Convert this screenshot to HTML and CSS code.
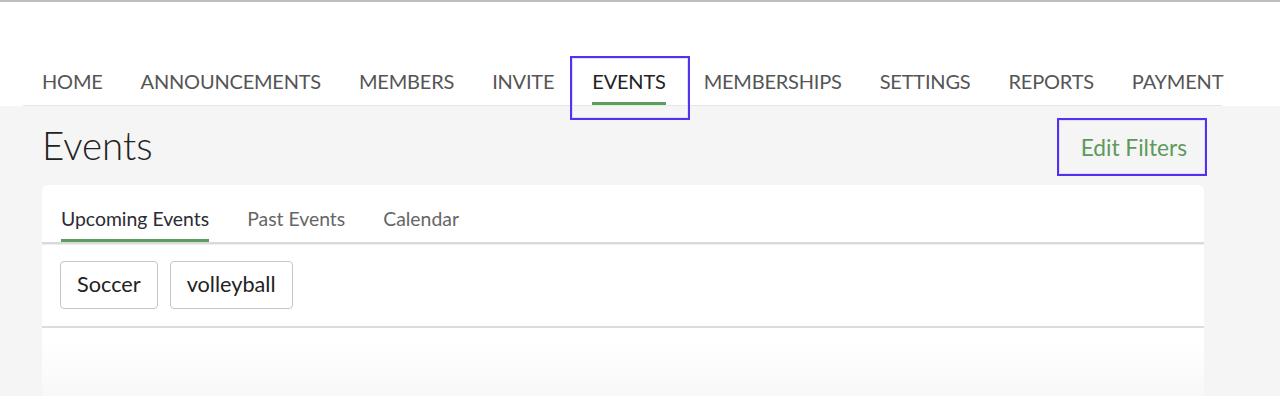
FILE: index.html
```html
<!DOCTYPE html>
<html lang="en">
<head>
    <meta charset="UTF-8">
    <meta name="viewport" content="width=device-width, initial-scale=1.0">
    <title>Events</title>
    <link rel="stylesheet" href="styles.css">
</head>
<body>
    <header class="topbar">
        <nav class="main-nav">
            <a href="#" class="nav-link">HOME</a>
            <a href="#" class="nav-link">ANNOUNCEMENTS</a>
            <a href="#" class="nav-link">MEMBERS</a>
            <a href="#" class="nav-link">INVITE</a>
            <a href="#" class="nav-link active">EVENTS</a>
            <a href="#" class="nav-link">MEMBERSHIPS</a>
            <a href="#" class="nav-link">SETTINGS</a>
            <a href="#" class="nav-link">REPORTS</a>
            <a href="#" class="nav-link">PAYMENT</a>
        </nav>
    </header>

    <div class="title-row">
        <h1 class="page-title">Events</h1>
        <button class="edit-filters">Edit Filters</button>
    </div>

    <div class="card">
        <div class="tabs">
            <a href="#" class="tab active">Upcoming Events</a>
            <a href="#" class="tab">Past Events</a>
            <a href="#" class="tab">Calendar</a>
        </div>
        <div class="tags">
            <button class="tag">Soccer</button>
            <button class="tag">volleyball</button>
        </div>
        <div class="card-body"></div>
    </div>
</body>
</html>
```

FILE: styles.css
```css
* {
    margin: 0;
    padding: 0;
    box-sizing: border-box;
    font-family: Lato, "Open Sans", Arial, sans-serif;
}
body {
    background: #f5f5f5;
    overflow: hidden;
}
.topbar {
    background: white;
    border-top: 2px solid #bdbdbd;
    padding-top: 67px;
}
.main-nav {
    display: flex;
    margin-left: 23px;
    width: 1199px;
    border-bottom: 1px solid #e6e6e6;
}
.nav-link {
    position: relative;
    display: block;
    margin: 0 19px;
    padding-bottom: 9px;
    border-bottom: 3px solid transparent;
    font-size: 20px;
    line-height: 24px;
    letter-spacing: -0.2px;
    color: #555;
    text-decoration: none;
}
.nav-link.active {
    color: #222;
    border-bottom-color: #5c9e5c;
}
.nav-link.active::after {
    content: "";
    position: absolute;
    left: -22px;
    right: -24px;
    top: -13px;
    bottom: -18px;
    border: 2px solid #5530ee;
    box-shadow: inset 0 0 0 1px #e2dbfc;
}
.title-row {
    display: flex;
    justify-content: space-between;
    align-items: flex-start;
    margin-left: 42px;
    width: 1165px;
    padding-top: 12px;
}
.page-title {
    margin-top: 3px;
    font-size: 38.5px;
    font-weight: 300;
    line-height: 48px;
    color: #222;
}
.edit-filters {
    padding: 13px 18px 12px 22px;
    border: 2px solid #5530ee;
    box-shadow: inset 0 0 0 1px #e2dbfc;
    background: transparent;
    font-size: 22.7px;
    line-height: 29px;
    color: #5c9a5c;
    cursor: pointer;
}
.card {
    margin: 9px 0 0 42px;
    width: 1162px;
    background: white;
    border-radius: 6px 6px 0 0;
}
.tabs {
    display: flex;
    gap: 38px;
    padding: 22px 19px 0;
    border-bottom: 2px solid #dadada;
    box-shadow: 0 1px 0 #eeeeee;
}
.tab {
    display: block;
    padding-bottom: 8px;
    border-bottom: 3px solid transparent;
    font-size: 19.4px;
    line-height: 24px;
    color: #666;
    text-decoration: none;
}
.tab.active {
    color: #2b2b33;
    border-bottom-color: #5c9e5c;
}
.tags {
    display: flex;
    gap: 12px;
    padding: 17px 18px 17px;
    border-bottom: 2px solid #dcdcdc;
}
.tag {
    padding: 9px 16px 10px;
    border: 1px solid #c6c6c6;
    border-radius: 4px;
    background: white;
    font-size: 21.7px;
    line-height: 27px;
    color: #222;
    cursor: pointer;
}
.card-body {
    height: 80px;
    background: linear-gradient(#ffffff 20%, #f6f6f6);
}
```
